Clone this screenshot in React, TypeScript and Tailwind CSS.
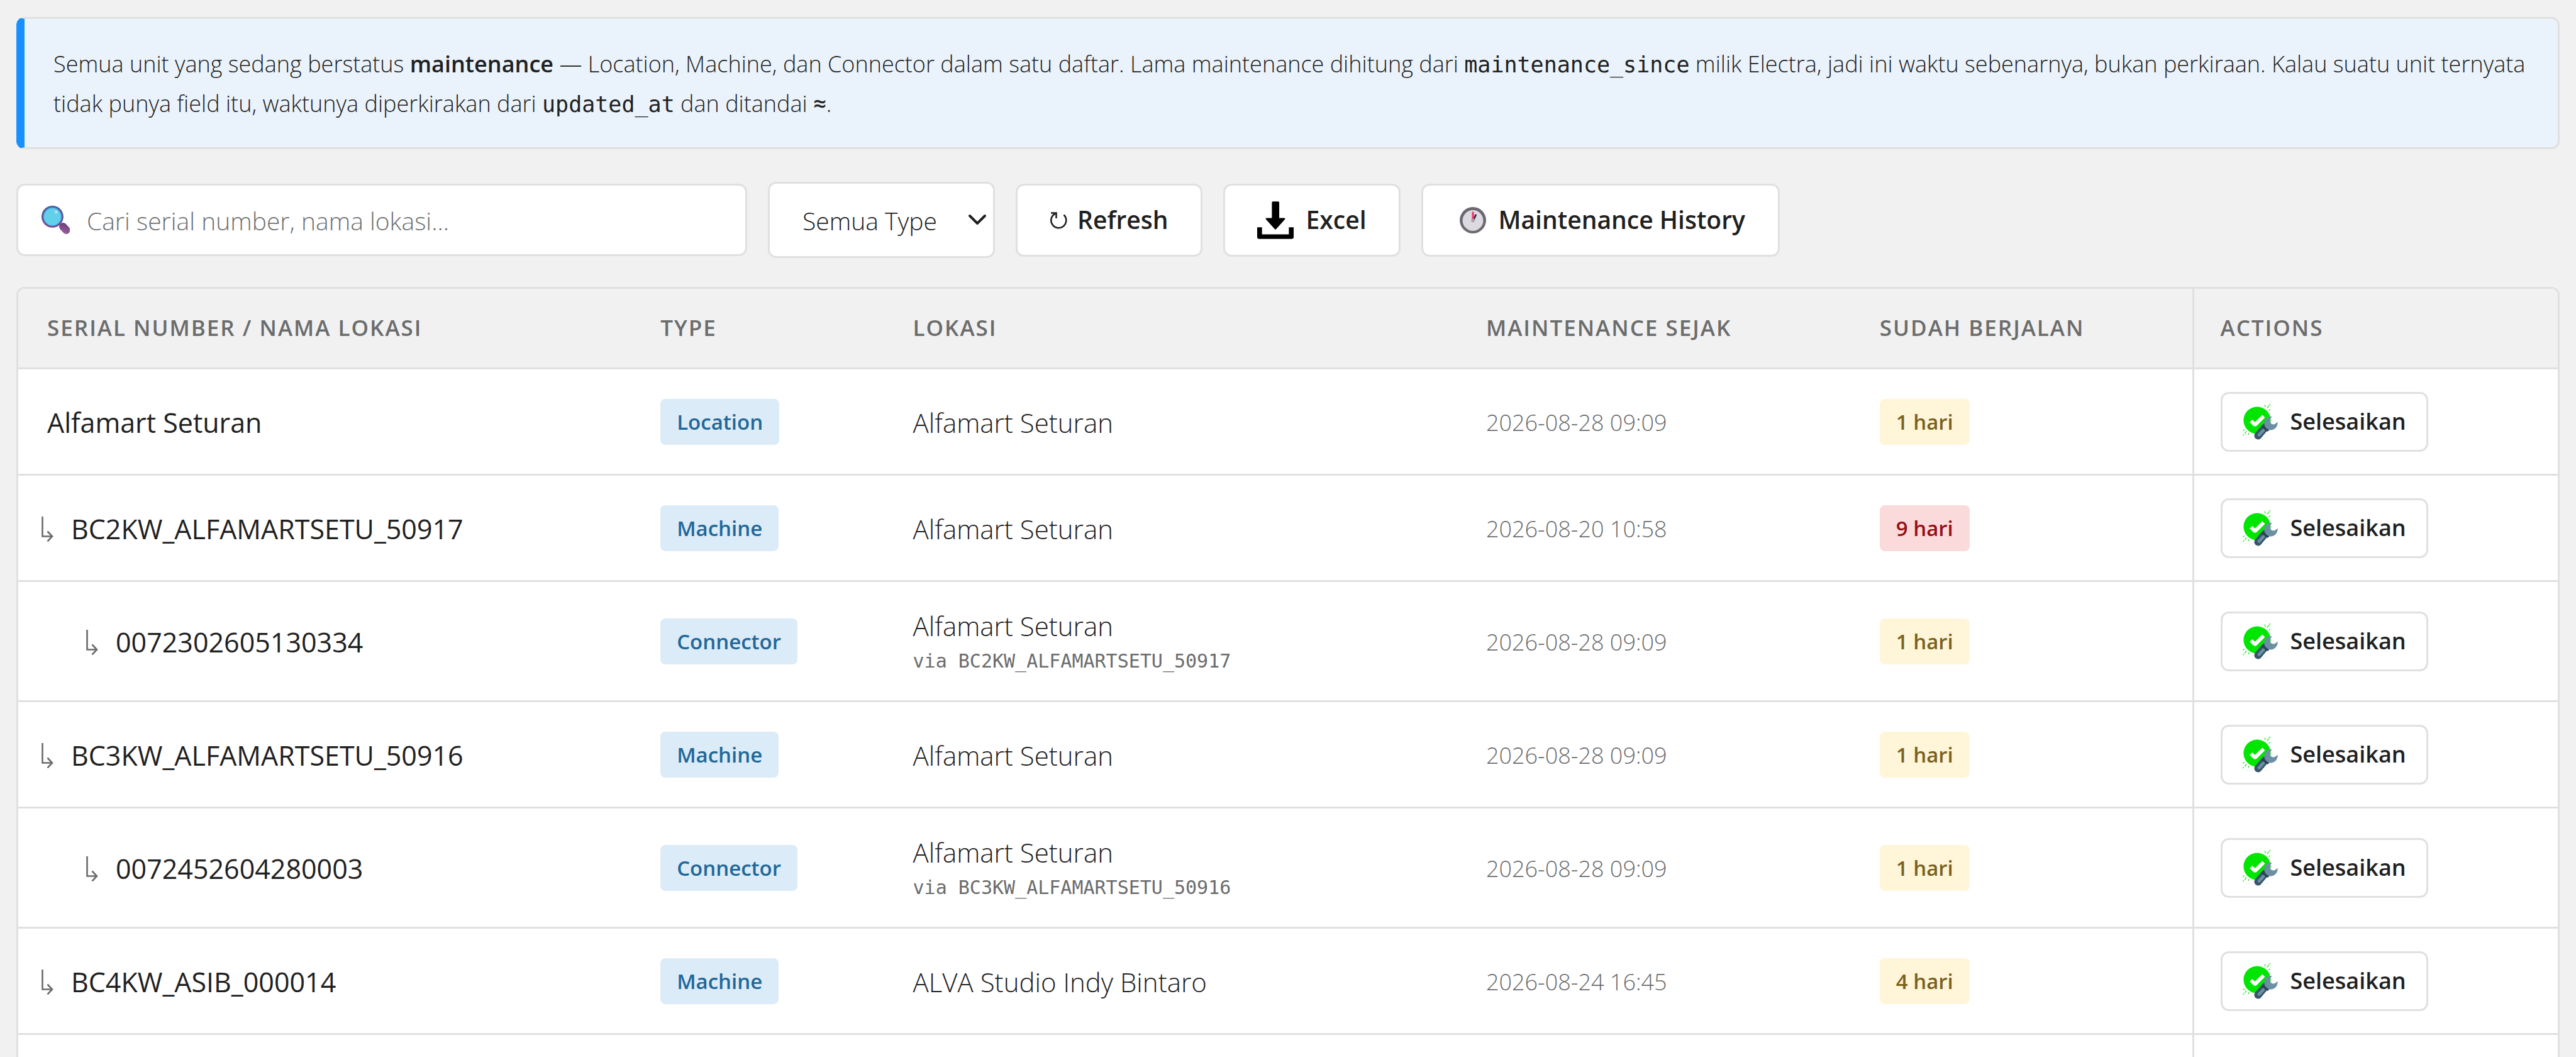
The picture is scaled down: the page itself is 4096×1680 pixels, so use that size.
import React, { useState } from "react";
import { ChevronDown } from "lucide-react";
import clsx from "clsx";

type UnitType = "Location" | "Machine" | "Connector";

interface MaintenanceUnit {
  name: string;
  type: UnitType;
  depth: 0 | 1 | 2;
  location: string;
  via?: string;
  since: string;
  days: number;
}

const units: MaintenanceUnit[] = [
  { name: "Alfamart Seturan", type: "Location", depth: 0, location: "Alfamart Seturan", since: "2026-08-28 09:09", days: 1 },
  { name: "BC2KW_ALFAMARTSETU_50917", type: "Machine", depth: 1, location: "Alfamart Seturan", since: "2026-08-20 10:58", days: 9 },
  { name: "0072302605130334", type: "Connector", depth: 2, location: "Alfamart Seturan", via: "BC2KW_ALFAMARTSETU_50917", since: "2026-08-28 09:09", days: 1 },
  { name: "BC3KW_ALFAMARTSETU_50916", type: "Machine", depth: 1, location: "Alfamart Seturan", since: "2026-08-28 09:09", days: 1 },
  { name: "0072452604280003", type: "Connector", depth: 2, location: "Alfamart Seturan", via: "BC3KW_ALFAMARTSETU_50916", since: "2026-08-28 09:09", days: 1 },
  { name: "BC4KW_ASIB_000014", type: "Machine", depth: 1, location: "ALVA Studio Indy Bintaro", since: "2026-08-24 16:45", days: 4 },
];

const columns = [
  { label: "Serial Number / Nama Lokasi", width: "w-[24.15%]" },
  { label: "Type", width: "w-[9.94%]" },
  { label: "Lokasi", width: "w-[22.57%]" },
  { label: "Maintenance Sejak", width: "w-[15.5%]" },
  { label: "Sudah Berjalan", width: "w-[13.44%]" },
  { label: "Actions", width: "w-[14.4%]" },
];

const depthPadding = {
  0: "pl-[46px]",
  1: "pl-[37px]",
  2: "pl-[108px]",
};

function SearchIcon() {
  return (
    <svg viewBox="0 0 55 55" className="size-[45px] shrink-0" aria-hidden="true">
      <defs>
        <linearGradient id="rim" x1="0" y1="0" x2="0" y2="1">
          <stop offset="0" stopColor="#43619f" />
          <stop offset="1" stopColor="#7c4490" />
        </linearGradient>
        <linearGradient id="grip" x1="0" y1="0" x2="1" y2="1">
          <stop offset="0" stopColor="#643a78" />
          <stop offset="1" stopColor="#a061a0" />
        </linearGradient>
      </defs>
      <rect x="33" y="36.5" width="24" height="15" rx="7" transform="rotate(47 45 44)" fill="url(#grip)" />
      <circle cx="21.3" cy="21.3" r="21.3" fill="url(#rim)" />
      <circle cx="21.3" cy="21.3" r="17.8" fill="#4fb5e6" />
      <circle cx="21.3" cy="21.8" r="16" fill="#63d0ea" />
      <circle cx="28.7" cy="12" r="3.2" fill="#b3dcf5" />
    </svg>
  );
}

function RefreshIcon() {
  return (
    <svg viewBox="0 0 28 28" className="size-7 shrink-0" fill="none" stroke="#1f2121" strokeWidth="2.6" aria-hidden="true">
      <path d="M22.500 5.500A12 12 0 1 1 9 3.500" />
      <path d="M2 2.500H10.500V11" />
    </svg>
  );
}

function DownloadIcon() {
  return (
    <svg viewBox="0 0 72 74" className="h-[60px] w-[58px] shrink-0" aria-hidden="true">
      <path d="M31 0h10.500a2 2 0 0 1 2 2v30.500H53q3.500 0 1.500 3L37.500 54.500q-1.500 1.500-3 0L17.500 35.500q-2-3 1.500-3h10V2a2 2 0 0 1 2-2z" />
      <path d="M0 51h9.500v14h53V51H72v19a4 4 0 0 1-4 4H4a4 4 0 0 1-4-4z" />
    </svg>
  );
}

function ClockIcon() {
  return (
    <svg viewBox="0 0 52 52" className="size-[42px] shrink-0" aria-hidden="true">
      <circle cx="26" cy="26" r="26" fill="#6e6b72" />
      <circle cx="26" cy="26" r="21.5" fill="#57535c" />
      <circle cx="26" cy="26.500" r="20.500" fill="#dcd9e0" />
      <path d="M31.500 16 27 26" stroke="#3b2456" strokeWidth="3.600" strokeLinecap="round" />
      <path d="M26 11v13" stroke="#f5315a" strokeWidth="3.800" strokeLinecap="round" />
      <circle cx="26" cy="26.500" r="3.600" fill="#aaa7b0" />
    </svg>
  );
}

function RepairedIcon() {
  return (
    <svg viewBox="0 0 70 71" className="h-[57px] w-[56px] shrink-0" aria-hidden="true">
      <circle cx="28.700" cy="32.500" r="27" fill="#00e600" />
      <path d="M14 36l5.300-5 5 5L39 21.700l5.300 5L28.500 42.700q-4 4-8 0z" fill="#fff" />
      <g stroke="#22e022" strokeWidth="1.600" strokeLinecap="round">
        <path d="M44 2.500l1 3M49 7.500l3-4M53.500 1.500l1-1M52.500 12.500l2-1" />
        <path d="M1 52.500l2-1.500M1 62l1-1.500M4.500 58.500l2.500-4M12 58v2.500" />
      </g>
      <path d="M6 66.500h14M42 66.500h9" stroke="#ececec" strokeWidth="1" />
      <path d="M45 46 30.500 63" stroke="#38566a" strokeWidth="15" strokeLinecap="round" />
      <path d="M41 41.500q4 8 12.500 9.500l-4 4-13-9z" fill="#2a4354" />
      <path d="M41 52.500 32.500 61.500" stroke="#6d8fa3" strokeWidth="6" strokeLinecap="round" />
      <path
        d="M58.500 25C48 24 41 32 43.500 41.500 46 50.500 55 54.500 62.500 50 67.500 47 70 41 69.500 35.500 66 39.500 61.500 42 57.500 39.500 52.500 36.500 53.500 30 58.500 25z"
        fill="#6d8fa3"
      />
    </svg>
  );
}

function ChildArrow() {
  return (
    <svg viewBox="0 0 19 40" className="h-10 w-[19px] shrink-0" fill="none" stroke="#6b6b6b" strokeWidth="2.600" aria-hidden="true">
      <path d="M1.500 0V31.500H16" />
      <path d="M9.500 23.500 17 31.500 9.500 39.500" />
    </svg>
  );
}

function Badge({ tone, children }: { tone: "blue" | "yellow" | "red"; children: React.ReactNode }) {
  return (
    <span
      className={clsx(
        "inline-block rounded-lg px-[26px] py-3 text-[33px] leading-[49px] font-semibold",
        tone === "blue" && "bg-[#dcebf8] text-[#1f6899]",
        tone === "yellow" && "bg-[#fff5d9] text-[#7a611c]",
        tone === "red" && "bg-[#fadadb] text-[#970f12]",
      )}
    >
      {children}
    </span>
  );
}

const controlStyle = "rounded-[13px] border-[3px] border-[#e0e0e0] bg-white";
const toolbarButton = clsx(controlStyle, "flex h-[116px] items-center text-[39px] font-semibold cursor-pointer");
const codeStyle = "font-['DejaVu_Sans_Mono',monospace] text-[35px] leading-none font-normal";

export default function App() {
  const [search, setSearch] = useState("");
  const [type, setType] = useState("");

  const rows = units.filter(
    (unit) =>
      (!type || unit.type === type) &&
      (unit.name + unit.location).toLowerCase().includes(search.toLowerCase()),
  );

  return (
    <main className="h-screen overflow-hidden bg-[#f1f1f1] px-[26px] pt-[27px] font-['Open_Sans','Noto_Sans',sans-serif] text-[#1f2121]">

      <p className="rounded-[13px] border-[3px] border-l-[13px] border-[#e0e0e0] border-l-[#1890ff] bg-[#eaf3fb] pt-10 pr-7 pb-[38px] pl-[46px] text-[36px] leading-[63px] font-light">
        Semua unit yang sedang berstatus <strong className="font-semibold">maintenance</strong> — Location, Machine, dan
        Connector dalam satu daftar. Lama maintenance dihitung dari{" "}
        <code className={codeStyle}>maintenance_since</code> milik Electra, jadi ini waktu sebenarnya, bukan perkiraan.
        Kalau suatu unit ternyata tidak punya field itu, waktunya diperkirakan dari{" "}
        <code className={codeStyle}>updated_at</code> dan ditandai <strong className="font-semibold">≈</strong>.
      </p>

      <div className="mt-[52px] flex items-center gap-[33px]">
        <label className={clsx(controlStyle, "flex h-[115px] w-[1162px] items-center gap-[27px] px-[37px]")}>
          <SearchIcon />
          <input
            type="text"
            aria-label="Cari serial number, nama lokasi"
            placeholder="Cari serial number, nama lokasi..."
            value={search}
            onChange={(e) => setSearch(e.target.value)}
            className="min-w-0 flex-1 bg-transparent pt-1 text-[39px] font-light outline-none placeholder:text-[#707070]"
          />
        </label>

        <div className="relative">
          <select
            aria-label="Type"
            value={type}
            onChange={(e) => setType(e.target.value)}
            className={clsx(controlStyle, "h-[121px] w-[361px] appearance-none pt-1 pl-[52px] text-[39px] font-light")}
          >
            <option value="">Semua Type</option>
            <option>Location</option>
            <option>Machine</option>
            <option>Connector</option>
          </select>
          <ChevronDown className="pointer-events-none absolute top-9 right-1 size-12" strokeWidth={2} />
        </div>

        <button type="button" className={clsx(toolbarButton, "gap-4 px-[51px]")}>
          <RefreshIcon />
          Refresh
        </button>
        <button type="button" className={clsx(toolbarButton, "gap-5 px-[51px]")}>
          <DownloadIcon />
          Excel
        </button>
        <button type="button" className={clsx(toolbarButton, "gap-5 pr-[52px] pl-[58px]")}>
          <ClockIcon />
          Maintenance History
        </button>
      </div>

      <div className="mt-[46px] overflow-hidden rounded-[13px] border-[3px] border-[#e0e0e0] bg-white">
        <table className="w-full table-fixed border-separate border-spacing-0 text-left">
          <thead>
            <tr className="h-[128px] bg-[#f1f1f1]">
              {columns.map((col) => (
                <th
                  key={col.label}
                  scope="col"
                  className={clsx(
                    "border-b-[3px] border-[#e0e0e0] pl-[46px] text-[35px] font-semibold tracking-[2px] text-[#6b6c6c] uppercase last:border-l-[3px] last:pl-[42px]",
                    col.width,
                  )}
                >
                  {col.label}
                </th>
              ))}
            </tr>
          </thead>
          <tbody className="[&_td]:border-b-[3px] [&_td]:border-[#e0e0e0] [&_td]:last:border-l-[3px]">
            {rows.map((unit) => (
              <tr key={unit.name} className={unit.via ? "h-[191px]" : "h-[169px]"}>
                <td className={depthPadding[unit.depth]}>
                  <div className="flex items-center gap-7 pt-1 text-[43px] leading-[60px]">
                    {unit.depth > 0 && <ChildArrow />}
                    {unit.name}
                  </div>
                </td>
                <td className="pl-[46px]">
                  <Badge tone="blue">{unit.type}</Badge>
                </td>
                <td className="pt-1 pl-[46px] text-[42px] leading-[60px] font-light">
                  {unit.location}
                  {unit.via && (
                    <div className="font-['DejaVu_Sans_Mono',monospace] text-[30px] leading-[52px] font-normal text-[#6b6c6c]">
                      via {unit.via}
                    </div>
                  )}
                </td>
                <td className="pt-1 pl-[46px] text-[36px] font-light text-[#6b6c6c]">{unit.since}</td>
                <td className="pl-[46px]">
                  <Badge tone={unit.days > 7 ? "red" : "yellow"}>{unit.days} hari</Badge>
                </td>
                <td className="pl-[42px]">
                  <button
                    type="button"
                    className={clsx(controlStyle, "flex h-[95px] items-center gap-5 px-8 text-[36px] font-semibold cursor-pointer")}
                  >
                    <RepairedIcon />
                    Selesaikan
                  </button>
                </td>
              </tr>
            ))}
            <tr className="h-[169px]" aria-hidden="true">
              {columns.map((col) => (
                <td key={col.label} />
              ))}
            </tr>
          </tbody>
        </table>
      </div>
    </main>
  );
}
